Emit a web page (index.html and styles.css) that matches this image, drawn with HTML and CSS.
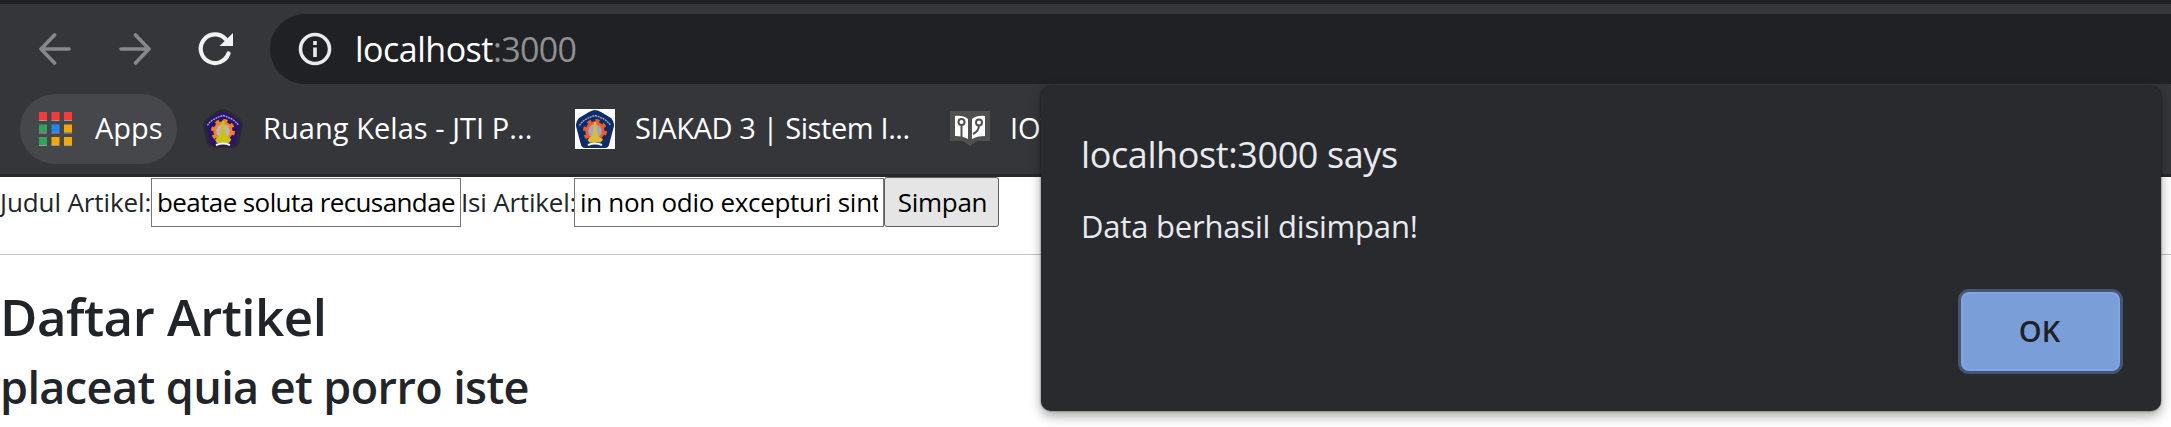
FILE: index.html
```html
<!DOCTYPE html>
<html lang="id">
<head>
<meta charset="utf-8">
<title>localhost:3000</title>
<link rel="stylesheet" href="styles.css">
</head>
<body>
<header class="browser">
  <div class="toolbar">
    <svg class="nav back" width="32" height="32" viewBox="0 0 32 32"><path d="M30 16H3M15.500 2L2 16l13.500 14"/></svg>
    <svg class="nav forward" width="32" height="32" viewBox="0 0 32 32"><path d="M2 16h27M16.500 2L30 16 16.500 30"/></svg>
    <svg class="reload" width="36" height="34" viewBox="0 0 36 34"><path class="arc" d="M30.500 21.500A14.300 14.300 0 1 1 27.500 7"/><path class="tip" d="M35 1v13H21.500z"/></svg>
    <div class="omnibox">
      <svg class="info" width="34" height="34" viewBox="0 0 34 34"><circle cx="17" cy="17" r="14.500"/><path d="M17 9v4M17 15.500V25"/></svg>
      <span class="url"><span class="host">localhost</span><span class="port">:3000</span></span>
    </div>
  </div>
  <nav class="bookmarks">
    <a class="apps"><svg width="34" height="34" viewBox="0 0 34 34"><path fill="#f93a37" d="M0 0h8v8H0zM12.500 0h8v8h-8zM25 0h8v8h-8z"/><path fill="#2fa35a" d="M0 12.500h8v8H0zM0 25h8v8H0z"/><path fill="#1e88f5" d="M12.500 12.500h8v8h-8z"/><path fill="#f6a704" d="M25 12.500h8v8h-8zM12.500 25h8v8h-8zM25 25h8v8h-8z"/><path class="shade" d="M0 8.500h8M12.500 8.500h8M25 8.500h8M0 21h8M12.500 21h8M25 21h8M0 33.500h8M12.500 33.500h8M25 33.500h8"/></svg><span>Apps</span></a>
    <a class="mark ruang"><svg width="40" height="40" viewBox="0 0 40 40"><path fill="#2a2a2c" d="M20 0q3 0 6 2l10 7q4 3 4 7l-4 18q-1 4-6 5H10q-5-1-6-5L0 16q0-4 4-7l10-7q3-2 6-2z"/><path fill="#28146e" d="M20 2.500q2 0 5 2l9 6q4 3 3.500 6L33 33q-1 4-5 4H12q-4 0-5-4L2.500 16.500q-.5-3 3.500-6l9-6q3-2 5-2z"/><path class="motto" d="M4.500 16.500Q8 10 20 6.500q12 3.500 15.500 10"/><circle class="gear" cx="20" cy="22" r="10.500"/><circle fill="#f58220" cx="20" cy="22" r="9.700"/><circle fill="#b9b2d6" cx="20" cy="22" r="6.800"/><path fill="#c9c414" d="M19 11.500h2l2 14 5 5.500-2 3H14l-2-3 5-5.500z"/><path class="ribbon" d="M13 36q7-3 14 0"/></svg><span>Ruang Kelas - JTI P...</span></a>
    <a class="mark siakad"><svg width="40" height="40" viewBox="0 0 40 40"><path fill="#fff" d="M0 0h40v40H0z"/><path fill="#0d2c6c" d="M20 1q2 0 6 2l10 6q3 3 3 8l-5 19q-1 3-4 3H10q-3 0-4-3L1 17q0-5 3-8l10-6q4-2 6-2z"/><path class="motto" d="M4.500 16.500Q8 10 20 6.500q12 3.500 15.500 10"/><circle class="gear" cx="20" cy="22" r="10.500"/><circle fill="#f45b20" cx="20" cy="22" r="9.700"/><circle fill="#9aa8d0" cx="20" cy="22" r="6.800"/><path fill="#d8bd35" d="M19 13h2l1.500 13 5 5-2 2.500h-11L12.500 31l5-5z"/><path class="ribbon" d="M13 36q7-3 14 0"/></svg><span>SIAKAD 3 | Sistem I...</span></a>
    <a class="mark iot"><svg width="40" height="40" viewBox="0 0 40 40"><path fill="#505050" d="M0 2h40v30H27l-7 5-7-5H0z"/><path fill="#fff" d="M5 7q8-1 13 3v20q-5-3-13-3zM35 7q-8-1-13 3v20q5-3 13-3z"/><path class="wire" d="M11.500 16v13M29 16q0 6-6 9"/><circle class="node" cx="11.500" cy="13" r="3"/><circle class="node" cx="29" cy="13.500" r="3"/></svg><span>IOT</span></a>
  </nav>
</header>
<main>
  <form class="entry"><label class="l1">Judul Artikel:</label><input class="f1" value="beatae soluta recusandae"><label class="l2">Isi Artikel:</label><input class="f2" value="in non odio excepturi sint"><button type="button" class="save">Simpan</button></form>
  <hr>
  <h1>Daftar Artikel</h1>
  <h2>placeat quia et porro iste</h2>
</main>
<section class="dialog">
  <p class="title">localhost:3000 says</p>
  <p class="message">Data berhasil disimpan!</p>
  <button type="button" class="ok">OK</button>
</section>
</body>
</html>
```
FILE: styles.css
```css
* { box-sizing: border-box; }
body { margin: 0; width: 2171px; height: 427px; overflow: hidden; position: relative; background: #fff; color: #212529; font-family: "Open Sans", "Noto Sans", sans-serif; }
svg { display: block; flex: none; fill: none; }
.browser { height: 177px; background: #35363a; border-top: 4px solid #202124; border-bottom: 3px solid #282828; }
.toolbar { display: flex; align-items: center; height: 90px; padding-left: 39px; }
.nav { stroke: #87888b; stroke-width: 3.6; stroke-linecap: round; stroke-linejoin: round; }
.forward { margin-left: 48px; }
.reload { margin-left: 47px; }
.arc { stroke: #f1f1f2; stroke-width: 4.2; stroke-linecap: round; }
.tip { fill: #f1f1f2; }
.omnibox { display: flex; align-items: center; flex: 1; height: 70px; margin-left: 36px; padding-left: 28px; border-radius: 35px 0 0 35px; background: #202124; font-size: 34px; }
.info { stroke: #e8eaed; stroke-width: 3.6; }
.url { margin-left: 23px; white-space: nowrap; }
.host { color: #fff; letter-spacing: -.5px; }
.port { color: #8f9092; letter-spacing: -.7px; }
.bookmarks { display: flex; align-items: center; height: 70px; padding-left: 20px; color: #fff; font-size: 29px; white-space: nowrap; }
.bookmarks span { position: relative; top: -2px; }
.apps { display: flex; align-items: center; width: 157px; height: 70px; padding-left: 19px; border-radius: 35px; background: #46474a; }
.apps span { margin-left: 22px; }
.shade { stroke: #9b9b9b; }
.mark { display: flex; align-items: center; }
.mark span { margin-left: 20px; }
.ruang { width: 372px; margin-left: 26px; letter-spacing: .05px; }
.siakad { width: 375px; letter-spacing: -.4px; }
.motto { stroke: #c9c6dc; stroke-width: 1.400; stroke-dasharray: 2 .7; opacity: .8; }
.gear { stroke: #f58220; stroke-width: 3; stroke-dasharray: 4.100 4.150; }
.siakad .gear { stroke: #f45b20; }
.ribbon { stroke: #fff; stroke-width: 2; }
.wire, .node { stroke: #505050; stroke-width: 2; }
.node { fill: #fff; }
.entry { display: flex; align-items: center; height: 50px; font-size: 26px; line-height: 40px; white-space: nowrap; }
.entry label { flex: none; }
.l1 { width: 151px; letter-spacing: -.1px; }
.l2 { width: 113px; letter-spacing: -.2px; }
.entry input { width: 310px; height: 49px; padding: 2px 5px; border: 1px solid #767676; border-radius: 0; background: #fff; color: #000; font: inherit; }
.entry .f1 { letter-spacing: -.6px; }
.entry .f2 { letter-spacing: -.3px; }
.save { width: 115px; height: 50px; padding: 0 0 0 2px; border: 1px solid #5c5c5c; border-radius: 3px; background: #e5e5e5; color: #000; font: inherit; letter-spacing: -.3px; }
hr { height: 1px; margin: 27px 0 0; border: 0; background: #c4c4c4; }
h1, h2 { margin: 0; font-weight: 600; white-space: nowrap; }
h1 { margin-top: 31px; font-size: 51px; line-height: 60px; letter-spacing: -.5px; }
h2 { margin-top: 13px; font-size: 45px; line-height: 56px; letter-spacing: -.6px; }
.dialog { position: absolute; left: 1041px; top: 86px; display: flex; flex-direction: column; width: 1119.500px; height: 325px; padding: 43px 37.500px 37px 40px; border-radius: 10px; background: #292a2d; color: #e8eaed; box-shadow: 0 0 2px rgba(0,0,0,.65), 0 5px 12px rgba(0,0,0,.35); white-space: nowrap; }
.dialog p { margin: 0; }
.title { font-size: 36px; line-height: 52px; letter-spacing: -.4px; }
.dialog .message { margin-top: 22px; font-size: 31px; line-height: 46px; letter-spacing: -.2px; }
.ok { align-self: flex-end; margin-top: auto; width: 165px; height: 85px; padding: 0 2px 3px 0; border: 3px solid #48566d; border-radius: 11px; background: #7a9ed8; box-shadow: inset 0 0 0 2px #7fa5e5; color: #202124; font: 600 29px "Open Sans", sans-serif; }
```
